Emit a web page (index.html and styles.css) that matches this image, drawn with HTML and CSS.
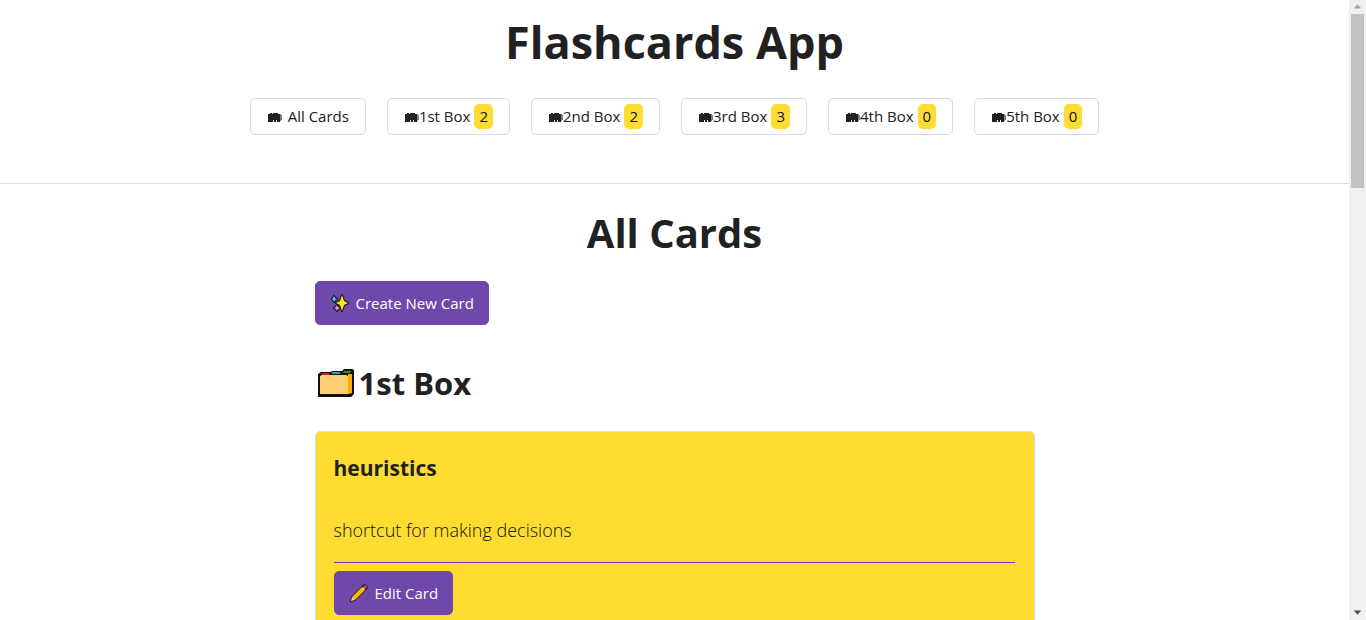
FILE: index.html
```html
<!DOCTYPE html>
<html lang="en">
<head>
<meta charset="utf-8">
<meta name="viewport" content="width=device-width, initial-scale=1">
<title>Flashcards App</title>
<link rel="stylesheet" href="styles.css">
</head>
<body>
<svg class="symbols" aria-hidden="true">
  <symbol id="dividers" viewBox="0 0 14 10">
    <path d="M12 2h1v1h1v5h-1v1h-1z" fill="#6d8496"/>
    <path d="M0 2h2V1h2v1h1V1h5v1h2v8H9V8H8v2H6V8H5v2H0z" fill="#212121"/>
  </symbol>
</svg>
<div class="window">
  <div class="page">
    <header class="header">
      <h1 class="title">Flashcards App</h1>
      <nav class="nav">
        <a class="tab" href="#all"><svg class="tab-icon spaced"><use href="#dividers"/></svg>All Cards</a>
        <a class="tab" href="#box1"><svg class="tab-icon"><use href="#dividers"/></svg>1st Box<span class="count">2</span></a>
        <a class="tab" href="#box2"><svg class="tab-icon"><use href="#dividers"/></svg>2nd Box<span class="count">2</span></a>
        <a class="tab" href="#box3"><svg class="tab-icon"><use href="#dividers"/></svg>3rd Box<span class="count">3</span></a>
        <a class="tab" href="#box4"><svg class="tab-icon"><use href="#dividers"/></svg>4th Box<span class="count">0</span></a>
        <a class="tab" href="#box5"><svg class="tab-icon"><use href="#dividers"/></svg>5th Box<span class="count">0</span></a>
      </nav>
    </header>
    <main class="main" id="all">
      <h2 class="heading">All Cards</h2>
      <button class="button" type="button">
        <svg class="button-icon" viewBox="0 0 18 18" aria-hidden="true">
          <g stroke="#171717" stroke-width="2" stroke-linejoin="round" paint-order="stroke">
            <path d="M11 1l2 6 4 2-4 2-2 6-2-6-4-2 4-2z" fill="#ffe81c"/>
            <path d="M3 2l1 2 2 1-2 1-1 2-1-2-1-1 1-1z" fill="#55cdf2"/>
            <path d="M6 11l1 2 2 1-2 1-1 2-1-2-2-1 2-1z" fill="#eb9ab5"/>
          </g>
        </svg>
        Create New Card
      </button>
      <section class="box" id="box1">
        <h3 class="box-title">
          <svg class="folder" viewBox="0 0 38 30" aria-hidden="true">
            <path d="M1 6l3-2h9l3-1h9l2-2h8l2 1v24l-3 3H1z" fill="#111"/>
            <path d="M31 6h4v19l-3 1h-1z" fill="#f9ad05"/>
            <path d="M3 8l2-1h24l2 1v18H3z" fill="#ffd073"/>
            <path d="M5 5h7v2H5z" fill="#e81224"/>
            <path d="M15 4h8v2h-8z" fill="#4190dc"/>
            <path d="M27 3h7v1h-1v1h-7V4h1z" fill="#13a10e"/>
          </svg>1st Box
        </h3>
        <article class="card">
          <h4 class="card-title">heuristics</h4>
          <p class="card-text">shortcut for making decisions</p>
          <div class="card-actions">
            <button class="button" type="button">
              <svg class="button-icon" viewBox="0 0 18 18" aria-hidden="true">
                <path d="M0 18l1-5L13 1l2-1 3 3-1 2L5 17z" fill="#171717"/>
                <path d="M2 13L12 3l3 3-10 10z" fill="#ffb900"/>
                <path d="M1 17l1-4 3 3z" fill="#e9dfc9"/>
                <path d="M12 4l1-1 2 2-1 1z" fill="#d2d2d2"/>
                <path d="M13 3l2-2 2 2-2 2z" fill="#e74856"/>
              </svg>
              Edit Card
            </button>
          </div>
        </article>
      </section>
    </main>
  </div>
  <div class="scrollbar" aria-hidden="true">
    <svg class="arrow" viewBox="0 0 17 13"><path d="M8 4h1v1h1v1h1v1h1v1H5V7h1V6h1V5h1z" fill="#a3a3a3"/></svg>
    <div class="thumb"></div>
    <svg class="arrow" viewBox="0 0 17 13"><path d="M5 4h7v1h-1v1h-1v1H9v1H8V7H7V6H6V5H5z" fill="#505050"/></svg>
  </div>
</div>
</body>
</html>
```
FILE: styles.css
```css
* {
  box-sizing: border-box;
}

body {
  margin: 0;
  color: #212121;
  background: #fff;
  font-family: "Segoe UI", "Open Sans", sans-serif;
  font-size: 15px;
  line-height: 24px;
}

h1, h2, h3, h4, p {
  margin: 0;
}

.symbols {
  position: absolute;
  width: 0;
  height: 0;
}

.window {
  display: flex;
  height: 100vh;
  overflow: hidden;
}

.page {
  flex: 1;
  min-width: 0;
  overflow: hidden;
}

.header {
  display: flex;
  flex-direction: column;
  align-items: center;
  gap: 26px;
  padding: 12px 16px 48px;
  border-bottom: 1px solid #dadada;
}

.title {
  font-size: 45px;
  line-height: 60px;
}

.nav {
  display: flex;
  flex-wrap: wrap;
  justify-content: center;
  gap: 21px;
}

.tab {
  display: flex;
  align-items: center;
  padding: 5px 16px;
  border: 1px solid #d8dae2;
  border-radius: 5px;
  color: inherit;
  text-decoration: none;
  line-height: 25px;
}

.tab-icon {
  width: 14px;
  height: 10px;
  margin-left: 1px;
}

.spaced {
  margin-right: 6px;
}

.count {
  margin-left: 4px;
  padding: 0 5px;
  border-radius: 5px;
  background: #ffdc32;
  color: #111;
}

.main {
  width: 100%;
  max-width: 720px;
  margin: 0 auto;
  padding-top: 21px;
}

.heading {
  margin-bottom: 21px;
  font-size: 40px;
  line-height: 55px;
  text-align: center;
}

.button {
  display: inline-flex;
  align-items: center;
  gap: 7px;
  padding: 9px 14px 9px 15px;
  border: 1px solid #6e48aa;
  border-radius: 5px;
  background: #6e48aa;
  color: #fff;
  font: inherit;
}

.button-icon {
  width: 18px;
  height: 18px;
}

.box-title {
  display: flex;
  align-items: center;
  gap: 4px;
  margin: 36px 0 26px;
  padding-left: 2px;
  font-size: 31px;
  line-height: 44px;
}

.folder {
  width: 38px;
  height: 30px;
}

.card {
  padding: 16px 19px 18px 18px;
  border: 1px solid #d8dae2;
  border-radius: 5px;
  background: #ffdc32;
}

.card-title {
  font-size: 21px;
  line-height: 40px;
}

.card-text {
  margin: 28px 0 18px;
  color: #111;
  font-size: 18px;
  font-weight: 300;
  line-height: 28px;
}

.card-actions {
  padding-top: 8px;
  border-top: 1px solid #6e48aa;
}

.scrollbar {
  display: flex;
  flex-direction: column;
  width: 17px;
  background: #f0f0f0;
}

.arrow {
  width: 17px;
  height: 14px;
}

.thumb {
  height: 28%;
  margin: 0 2px auto;
  background: #c1c1c1;
}
```
